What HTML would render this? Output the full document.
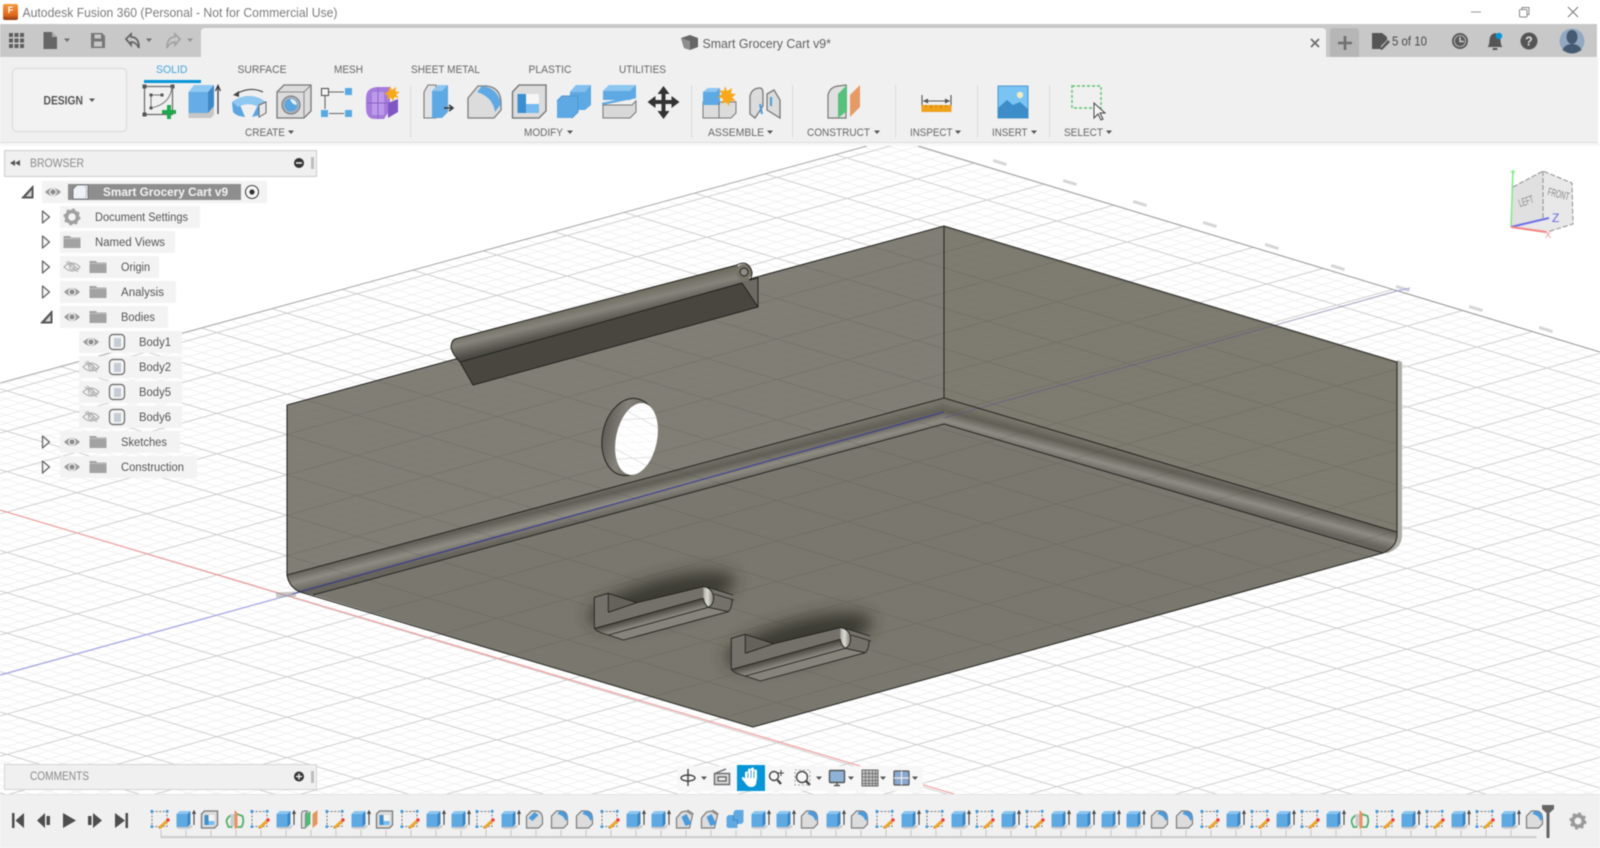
<!DOCTYPE html>
<html><head><meta charset="utf-8"><title>Autodesk Fusion 360</title>
<style>
html,body{margin:0;padding:0;background:#fff;width:1600px;height:848px;overflow:hidden}
svg{display:block;filter:blur(.55px)}
text{font-family:"Liberation Sans",sans-serif}
</style></head><body>
<svg width="1600" height="848" viewBox="0 0 1600 848" xmlns="http://www.w3.org/2000/svg">
<defs>
<pattern id="g" width="100" height="100" patternUnits="userSpaceOnUse" patternTransform="matrix(.7 .21 .7 -.194 285 596)">
<g fill="#eeeeee"><rect x="20" width="2" height="100"/><rect x="40" width="2" height="100"/><rect x="60" width="2" height="100"/><rect x="80" width="2" height="100"/><rect y="20" width="100" height="2"/><rect y="40" width="100" height="2"/><rect y="60" width="100" height="2"/><rect y="80" width="100" height="2"/></g>
<g fill="#d0d0d0"><rect x="0" width="2.6" height="100"/><rect y="0" width="100" height="2.6"/></g>
</pattern>
<pattern id="gd" width="100" height="100" patternUnits="userSpaceOnUse" patternTransform="matrix(.7 .21 .7 -.194 285 596)">
<g fill="#3c3c34" opacity=".03"><rect x="20" width="2" height="100"/><rect x="40" width="2" height="100"/><rect x="60" width="2" height="100"/><rect x="80" width="2" height="100"/><rect y="20" width="100" height="2"/><rect y="40" width="100" height="2"/><rect y="60" width="100" height="2"/><rect y="80" width="100" height="2"/></g>
<g fill="#3c3c34" opacity=".16"><rect x="0" width="2.6" height="100"/><rect y="0" width="100" height="2.6"/></g>
</pattern>
<pattern id="tick" x="160.5" y="830" width="25" height="10" patternUnits="userSpaceOnUse"><rect width="1" height="7" fill="#c4c4c4"/></pattern>
<linearGradient id="bL" gradientUnits="userSpaceOnUse" x1="600" y1="487" x2="607" y2="515"><stop offset="0" stop-color="#777569"/><stop offset=".3" stop-color="#625f57"/><stop offset=".65" stop-color="#8e8c83"/><stop offset="1" stop-color="#66645c"/></linearGradient>
<linearGradient id="bR" gradientUnits="userSpaceOnUse" x1="1170" y1="463" x2="1163" y2="489"><stop offset="0" stop-color="#777569"/><stop offset=".3" stop-color="#625f57"/><stop offset=".65" stop-color="#8e8c83"/><stop offset="1" stop-color="#66645c"/></linearGradient>
<linearGradient id="hd" gradientUnits="userSpaceOnUse" x1="595" y1="300" x2="601" y2="325"><stop offset="0" stop-color="#6d695e"/><stop offset=".45" stop-color="#86847b"/><stop offset="1" stop-color="#4c4a44"/></linearGradient>
<linearGradient id="ho" x1="0" x2="1" y1="0" y2="0"><stop offset="0" stop-color="#5f5d56"/><stop offset=".35" stop-color="#84827a"/><stop offset="1" stop-color="#55534c"/></linearGradient>
<linearGradient id="sl" gradientUnits="userSpaceOnUse" x1="650" y1="606" x2="656" y2="628"><stop offset="0" stop-color="#6a685f"/><stop offset=".35" stop-color="#4f4d46"/><stop offset=".7" stop-color="#8c8a81"/><stop offset="1" stop-color="#55534c"/></linearGradient>
<linearGradient id="cap" x1="0" x2="1" y1="0" y2="0"><stop offset="0" stop-color="#a9a79e"/><stop offset=".4" stop-color="#dcdcd6"/><stop offset="1" stop-color="#77756c"/></linearGradient>
<filter id="blur8" x="-50%" y="-100%" width="200%" height="300%"><feGaussianBlur stdDeviation="8"/></filter>
<clipPath id="grid"><polygon points="0,383 893,139 1600,352 1600,848 0,848"/></clipPath>
<clipPath id="body"><path d="M287 405L944 226L1397 362V532L1383 553L753 727L300 592Q289 587 287 575Z"/></clipPath>
<linearGradient id="app" x1="0" x2="0" y1="0" y2="1"><stop offset="0" stop-color="#f59a3c"/><stop offset=".7" stop-color="#e2661a"/><stop offset="1" stop-color="#8b3a10"/></linearGradient>

<g id="slot">
<path d="M594.3 597.3L608.3 593.3L636.7 602.7L703.3 586.7L708 587.3L733 595L730 602L728.3 611.7L623.3 640L608.3 635Q598 633 594.3 628Z" fill="#73716a"/>
<path d="M595 628.3L703.3 598.3L708.3 607.3L608.3 635Q598 633 595 628.3Z" fill="url(#sl)"/>
<path d="M608.3 635L708.3 607.3L728.3 611.7L623.3 640Z" fill="#85837a"/>
<path d="M703.3 586.7Q712 588 713.5 596Q714.5 604 708.3 607.3Q704 604 703.3 598.3Z" fill="url(#cap)"/>
<path d="M608.3 612.3L636.7 602.7L608.3 593.3Z" fill="#64625a"/>
<g fill="none" stroke="#22221f" stroke-width=".9" stroke-linejoin="round">
<path d="M608.3 612.3V593.3L594.3 597.3V628Q596 632 608.3 635L623.3 640L728.3 611.7Q732 608 732 600"/>
<path d="M608.3 593.3L636.7 602.7L608.3 612.3"/>
<path d="M636.7 602.7L703.3 586.7Q712 588 713.5 596Q714.5 604 708.3 607.3L608.3 635"/>
<path d="M595 628.3L703.3 598.3"/>
<path d="M703.3 598.3Q704 604 708.3 607.3L728.3 611.7"/>
<path d="M708 587.3L733 595M714 594L734 600"/>
</g>
</g>

<g id="sk"><rect x="-7.5" y="-7.5" width="15" height="15" fill="none" stroke="#777" stroke-dasharray="2 1.6"/><g fill="#3c9be0"><rect x="-9" y="-9" width="2.6" height="2.6"/><rect x="6.4" y="-9" width="2.6" height="2.6"/><rect x="-9" y="6.4" width="2.6" height="2.6"/></g><rect x="-1" y="7" width="2.4" height="2.4" fill="#777"/><path d="M0 9L7.5 2" stroke="#eea52a" stroke-width="3"/><circle cx="8.5" cy="1" r="1.7" fill="#ef3d3d"/></g>
<g id="ex"><path d="M-8 7V9L-5 10H5L8 8V6Z" fill="#ccc"/><path d="M-8 -5H3V8H-8Z" fill="#5fa9e3"/><path d="M-8 -5L-5 -8H6L3 -5Z" fill="#8cc6f0"/><path d="M3 -5L6 -8V5L3 8Z" fill="#3c86c4"/><path d="M9.5 6V-7M8 -5L9.5 -8L11 -5" stroke="#444" fill="none" stroke-width="1.1"/></g>
<g id="sh"><path d="M-8 -5L-5 -8H8V6L5 9H-8Z" fill="#dcdcdc" stroke="#777" stroke-width="1.3"/><path d="M-5 -4H5V6H-5Z" fill="#f3f3f3"/><path d="M-5 -4H-1V2H5V6H-5Z" fill="#3d8fce"/><path d="M-1 2H5V6H-1Z" fill="#77bdf0"/></g>
<g id="mi"><path d="M-8 3A7 7 0 0 1 -2 -4L-2 -1M-8 3L-6 8H-2" fill="none" stroke="#54b06f" stroke-width="1.8"/><path d="M2 -5L8 -3Q10 3 7 8H2" fill="none" stroke="#54b06f" stroke-width="1.8"/><rect x="-4" y="-5" width="7" height="12" fill="#ccc"/><path d="M0 -9L3 -6V9L0 10Z" fill="#e59464"/></g>
<g id="pl"><path d="M-8 9V-5Q-8 -8 -5 -8H-2L-4 -5V9Z" fill="#ddd" stroke="#777"/><path d="M-4 -5L1 -8V5L-4 9Z" fill="#54b876"/><path d="M3 -5L8 -9V5L3 9Z" fill="#e39563"/></g>
<g id="fi"><path d="M-8 -3L-3 -8H1Q8 -8 8 0V5L4 9H-8Z" fill="#dcdcdc" stroke="#7c7c7c" stroke-width="1.2"/><path d="M0 -8Q7 -8 8.5 -1L6 2Q4 -4 -2 -5Z" fill="#4b9bdc"/></g>
<g id="ch"><path d="M-8 -3L-3 -8H1Q8 -8 8 0V5L4 9H-8Z" fill="#dcdcdc" stroke="#7c7c7c" stroke-width="1.2"/><path d="M-6 -1L0 -7L4 -4L-2 2Z" fill="#4b9bdc"/></g>
<g id="dr"><path d="M-8 9V-1L-3 -7L2 -8L8 -4L5 9Z" fill="#dcdcdc" stroke="#7c7c7c" stroke-width="1.2"/><path d="M-3 -2L2 -5L7 5L1 7Z" fill="#4b9bdc"/><path d="M3 -9L9 -5" stroke="#666"/></g>
<g id="co"><path d="M-8 -2L-6 -4H-1V-7L1 -9H9V3L7 5H3V9H-6L-8 8Z" fill="#5fa9e3"/><path d="M-1 -4V1H3V5" fill="none" stroke="#3c86c4"/></g>

<g id="eye"><path d="M-8 0Q0 -8 8 0Q0 8 -8 0Z" fill="#9a9a9a"/><circle r="3.8" fill="#f0f0f0"/><circle r="2.5" fill="#8a8a8a"/></g>
<g id="eyeoff"><path d="M-8 0Q0 -8 8 0Q0 8 -8 0Z" fill="none" stroke="#a8a8a8"/><circle r="2.6" fill="none" stroke="#a8a8a8"/><path d="M-6 -5L6 5M-4 -6L7 3" stroke="#a8a8a8"/></g>
<g id="fold"><path d="M-8.5 -6H-2L-1 -4.5H8.5V6H-8.5Z" fill="#a2a2a2"/><path d="M-8.5 -3.5H8.5" stroke="#c8c8c8" stroke-width=".8"/></g>
<g id="bodyi"><rect x="-7.5" y="-7.5" width="15" height="15" rx="3.5" fill="#f4f4f4" stroke="#666" stroke-width="1.2"/><rect x="-3" y="-4" width="7" height="9" fill="#c6ccd6"/></g>
<g id="tr"><path d="M0 -6L7 0L0 6Z" fill="#f6f6f6" stroke="#666" stroke-width="1.3" stroke-linejoin="round"/></g>
<g id="trd"><path d="M0 6H11V-6Z" fill="#5a5a5a" stroke="#555" stroke-linejoin="round"/><path d="M4 4.5H9.5V-2Z" fill="#fff" opacity=".75"/></g>
<g id="dn"><path d="M-3 -1.5H3L0 2Z" fill="#555"/></g>
</defs>

<!-- viewport -->
<rect width="1600" height="848" fill="#fff"/>
<rect width="1600" height="848" fill="url(#g)" clip-path="url(#grid)"/>
<polyline points="0,383 867,146" fill="none" stroke="#a6a6a6" stroke-width="1"/>
<polyline points="918,146 1600,352" fill="none" stroke="#979797" stroke-width="1"/>
<g fill="#c6c6c6" opacity=".7"><rect x="993" y="161" width="14" height="3" transform="rotate(17 1000 162)"/><rect x="1063" y="181" width="14" height="3" transform="rotate(17 1070 182)"/><rect x="1133" y="202" width="14" height="3" transform="rotate(17 1140 203)"/><rect x="1203" y="223" width="14" height="3" transform="rotate(17 1210 224)"/><rect x="1265" y="245" width="14" height="3" transform="rotate(17 1272 246)"/><rect x="1331" y="266" width="14" height="3" transform="rotate(17 1338 267)"/><rect x="1396" y="287" width="14" height="3" transform="rotate(17 1403 288)"/><rect x="1469" y="307" width="14" height="3" transform="rotate(17 1476 308)"/><rect x="1539" y="328" width="14" height="3" transform="rotate(17 1546 329)"/></g>
<line x1="0" y1="510" x2="954" y2="794" stroke="#f29a9a" stroke-width="1.1"/>
<line x1="0" y1="675" x2="300" y2="592" stroke="#a4a4ee" stroke-width="1.1"/>
<line x1="1397" y1="291" x2="1410" y2="288" stroke="#a4a4ee" stroke-width="1"/>

<!-- body -->
<path d="M1397 360L1402 362V535Q1402 548 1388 553L1383 553L1397 532Z" fill="#aeaca5"/>
<path d="M944 424L1383 553L753 727L313 595Z" fill="#7a786e"/>
<path d="M287 405L944 226V398L287 575Z" fill="#807e75"/>
<path d="M944 226L1397 362V532L944 398Z" fill="#7e7b70"/>
<ellipse cx="662" cy="599" rx="76" ry="20" fill="#2a2924" opacity=".8" filter="url(#blur8)" transform="rotate(-15 662 599)"/>
<ellipse cx="799" cy="640" rx="76" ry="20" fill="#2a2924" opacity=".8" filter="url(#blur8)" transform="rotate(-15 799 640)"/>
<path d="M287 575L944 398V424L313 595L300 592Q289 587 287 575Z" fill="url(#bL)"/>
<path d="M944 398L1397 532Q1398 547 1383 553L944 424Z" fill="url(#bR)"/>
<rect width="1600" height="848" fill="url(#gd)" clip-path="url(#body)"/>
<line x1="292" y1="594" x2="944" y2="412" stroke="#30309a" stroke-width="1.1" opacity=".85"/>
<line x1="944" y1="418" x2="1397" y2="291" stroke="#54548c" stroke-width="1" opacity=".55"/>
<g fill="none" stroke="#2b2b28" stroke-width="1.1" stroke-linejoin="round">
<path d="M287 405L944 226L1397 362V532Q1398 547 1383 553L753 727L300 592Q289 587 287 575Z"/>
<path d="M944 226V398"/>
<path d="M287 575L944 398L1397 532"/>
<path d="M313 595L944 424L1383 553"/>
</g>
<rect x="276" y="592" width="20" height="5" fill="#9a9a9a" opacity=".55" transform="rotate(-2 286 594)"/>

<!-- handle -->
<path d="M460 362L742 283L758 278V307L473 385Z" fill="#48463f"/>
<path d="M742 283L758 278V307Z" fill="#6c6a62"/>
<path d="M451 348Q451 341 455 339L737 265L750 280L742 283L460 362Q453 355 451 348Z" fill="url(#hd)"/>
<circle cx="744" cy="272" r="8" fill="#777569"/>
<circle cx="744" cy="272" r="4" fill="#8e8c83"/>
<g fill="none" stroke="#23231f" stroke-width="1">
<path d="M451 348Q451 341 455 339L737 265Q748 259 752 272Q752 277 750 280L758 278V307L473 385L460 362Q453 355 451 348"/>
<path d="M460 362L742 283"/><circle cx="744" cy="272" r="4"/>
<path d="M742 283L758 307"/>
</g>

<!-- hole -->
<ellipse cx="629.500" cy="437" rx="27" ry="39" transform="rotate(12 629.500 437)" fill="url(#ho)" stroke="#25251f" stroke-width="1"/>
<ellipse cx="636.500" cy="439" rx="20.500" ry="36.500" transform="rotate(12 636.500 439)" fill="#fff"/>
<ellipse cx="636.500" cy="439" rx="20.500" ry="36.500" transform="rotate(12 636.500 439)" fill="url(#g)" opacity=".6"/>

<!-- slots -->
<use href="#slot"/>
<use href="#slot" x="137" y="41"/>

<!-- view cube -->
<path d="M1513 187L1543 171L1572 183L1573 224L1547 232L1511 227Z" fill="#e4e4e4" opacity=".85"/>
<path d="M1513 187L1543 171V220L1511 227Z" fill="#e0e0e0"/>
<g fill="none" stroke="#8f8f8f" stroke-dasharray="5 2"><path d="M1513 187L1543 171L1572 183L1573 224L1547 232"/><path d="M1543 171V220"/></g>
<path d="M1511 227L1513 170" stroke="#89e88d" stroke-width="1.6"/>
<path d="M1511 227L1549 218" stroke="#6f6fe8" stroke-width="2"/>
<path d="M1511 227L1546 232" stroke="#f58383" stroke-width="2"/>
<text x="1510" y="177" font-size="9" fill="#8fe891" textLength="6">Y</text>
<text x="1552" y="222" font-size="12" fill="#6767e6" textLength="8">Z</text>
<text x="1545" y="238" font-size="9" fill="#f58b8b" textLength="7">X</text>
<text transform="translate(1520 207) rotate(-18)" font-size="11" fill="#888" textLength="15" lengthAdjust="spacingAndGlyphs">LEFT</text>
<text transform="translate(1547 195) rotate(14)" font-size="11" fill="#888" textLength="22" lengthAdjust="spacingAndGlyphs">FRONT</text>

<!-- title bar -->
<rect width="1600" height="25" fill="#fff"/>
<rect x="3" y="4" width="15" height="16" rx="2" fill="url(#app)"/>
<text x="10.5" y="13" font-size="9" font-weight="700" fill="#fff" text-anchor="middle">F</text>
<text x="22.5" y="17" font-size="13" fill="#7c7c7c" textLength="315" lengthAdjust="spacingAndGlyphs">Autodesk Fusion 360 (Personal - Not for Commercial Use)</text>
<path d="M1471 12H1481" stroke="#999"/>
<g fill="none" stroke="#888"><rect x="1519.5" y="9.5" width="7.5" height="7.5" rx="1"/><path d="M1522 9V7.5H1529V14.5H1527"/></g>
<path d="M1568 7L1578 17M1578 7L1568 17" stroke="#777"/>

<!-- tab strip -->
<rect y="24" width="1597" height="33" fill="#c8c8c8"/>
<rect x="1597" y="24" width="3" height="33" fill="#fff"/>
<path d="M201 57V32Q201 28 205 28H1322Q1326 28 1326 32V57Z" fill="#f0f0f0"/>
<path d="M1330 57V32Q1330 28 1334 28H1355Q1359 28 1359 32V57Z" fill="#b6b6b6"/>
<path d="M1345 36V50M1338 43H1352" stroke="#6f6f6f" stroke-width="2.6"/>
<path d="M1311 39L1319 47M1319 39L1311 47" stroke="#6b6b6b" stroke-width="1.7"/>
<rect y="57" width="1598" height="86" fill="#f0f0f0"/>
<rect y="142" width="1598" height="1" fill="#dcdcdc"/>
<rect y="143" width="1600" height="3" fill="#f7f7f7"/>

<!-- qat -->
<g fill="#5e5e5e"><rect x="9" y="33" width="4" height="4"/><rect x="14.5" y="33" width="4" height="4"/><rect x="20" y="33" width="4" height="4"/><rect x="9" y="38.5" width="4" height="4"/><rect x="14.5" y="38.5" width="4" height="4"/><rect x="20" y="38.5" width="4" height="4"/><rect x="9" y="44" width="4" height="4"/><rect x="14.5" y="44" width="4" height="4"/><rect x="20" y="44" width="4" height="4"/></g>
<path d="M43.5 32H52L57 37V49H43.5Z" fill="#666"/><path d="M52 32V37H57Z" fill="#aaa"/>
<use href="#dn" x="67" y="40" opacity=".8"/>
<path d="M91 33H102L105 36V48H91Z" fill="#777"/><rect x="94.500" y="34.500" width="6.500" height="4" fill="#c8c8c8"/><rect x="94" y="41.500" width="8" height="5" fill="#c8c8c8"/>
<path d="M126 39L131 34V37Q139 37 139 48Q136 42 131 42V45Z" fill="none" stroke="#666" stroke-width="1.8"/>
<use href="#dn" x="149" y="40" opacity=".8"/>
<path d="M180 39L175 34V37Q167 37 167 48Q170 42 175 42V45Z" fill="none" stroke="#a4a4a4" stroke-width="1.8"/>
<use href="#dn" x="190" y="40" opacity=".45"/>

<!-- doc title -->
<path d="M681 38L690 35L698 38V47L690 50L684 48Z" fill="#666"/><path d="M681 38L690 41V50L684 48Z" fill="#8e8e8e"/>
<text x="702.5" y="48" font-size="13" fill="#5f5f5f" textLength="128.5" lengthAdjust="spacingAndGlyphs">Smart Grocery Cart v9*</text>

<!-- right tab icons -->
<path d="M1372 33H1382L1387 37V40L1381 46V49H1372Z" fill="#555"/><path d="M1380 49L1388 40L1390 42L1382 50Z" fill="#555"/>
<text x="1392" y="45.500" font-size="12.5" fill="#4a4a4a" textLength="35" lengthAdjust="spacingAndGlyphs">5 of 10</text>
<circle cx="1460" cy="41" r="8" fill="#5a5a5a"/><circle cx="1460" cy="41" r="5.6" fill="none" stroke="#c8c8c8" stroke-width=".8"/><path d="M1460 37V41.5H1464" stroke="#ddd" fill="none" stroke-width="1.3"/>
<path d="M1495 33Q1490 34 1489.5 40Q1489.5 45 1487.5 47H1502.5Q1500.5 45 1500.5 40Q1500 34 1495 33Z" fill="#555"/><rect x="1492.5" y="48" width="5" height="2" rx="1" fill="#555"/><circle cx="1499" cy="36" r="3.2" fill="#0696d7"/>
<circle cx="1529" cy="41" r="8.5" fill="#555"/><text x="1529" y="45.5" font-size="12.5" font-weight="700" fill="#ddd" text-anchor="middle">?</text>
<circle cx="1572" cy="41" r="12.5" fill="#92a8c2"/><ellipse cx="1572" cy="37" rx="5.5" ry="7" fill="#465a73"/><path d="M1562.5 50Q1565 44 1572 44Q1579 44 1581.5 50Q1572 57 1562.5 50Z" fill="#465a73"/>

<!-- ribbon tabs -->
<g font-size="11" fill="#666">
<text x="156" y="73" fill="#47a3dc" textLength="31.5" lengthAdjust="spacingAndGlyphs">SOLID</text>
<text x="237.5" y="73" textLength="49" lengthAdjust="spacingAndGlyphs">SURFACE</text>
<text x="334" y="73" textLength="29" lengthAdjust="spacingAndGlyphs">MESH</text>
<text x="411" y="73" textLength="69" lengthAdjust="spacingAndGlyphs">SHEET METAL</text>
<text x="528.5" y="73" textLength="43" lengthAdjust="spacingAndGlyphs">PLASTIC</text>
<text x="619" y="73" textLength="47" lengthAdjust="spacingAndGlyphs">UTILITIES</text>
<text x="245" y="136" textLength="40" lengthAdjust="spacingAndGlyphs">CREATE</text>
<text x="524" y="136" textLength="39" lengthAdjust="spacingAndGlyphs">MODIFY</text>
<text x="708" y="136" textLength="56" lengthAdjust="spacingAndGlyphs">ASSEMBLE</text>
<text x="807" y="136" textLength="63" lengthAdjust="spacingAndGlyphs">CONSTRUCT</text>
<text x="910" y="136" textLength="42.5" lengthAdjust="spacingAndGlyphs">INSPECT</text>
<text x="992" y="136" textLength="35.5" lengthAdjust="spacingAndGlyphs">INSERT</text>
<text x="1064" y="136" textLength="39" lengthAdjust="spacingAndGlyphs">SELECT</text>
</g>
<rect x="144" y="80" width="57" height="3" fill="#0696d7"/>
<use href="#dn" x="291" y="132"/><use href="#dn" x="570" y="132"/><use href="#dn" x="770" y="132"/><use href="#dn" x="877" y="132"/><use href="#dn" x="958" y="132"/><use href="#dn" x="1034" y="132"/><use href="#dn" x="1109" y="132"/>
<g fill="#dedede"><rect x="410" y="85" width="1.2" height="53"/><rect x="691" y="85" width="1.2" height="53"/><rect x="792" y="85" width="1.2" height="53"/><rect x="895" y="85" width="1.2" height="53"/><rect x="977" y="85" width="1.2" height="53"/><rect x="1049" y="85" width="1.2" height="53"/></g>

<!-- design -->
<rect x="12.5" y="68.5" width="114" height="63" rx="4" fill="#f2f2f2" stroke="#e0e0e0" stroke-width="1.5"/>
<text x="43.5" y="104.500" font-size="11.5" font-weight="700" fill="#555" textLength="39.5" lengthAdjust="spacingAndGlyphs">DESIGN</text>
<use href="#dn" x="92" y="100"/>

<!-- create icons -->
<g>
<rect x="144.5" y="86.5" width="28" height="28" fill="none" stroke="#666" stroke-width="1.2"/>
<g fill="#555"><rect x="142.5" y="84.5" width="4" height="4"/><rect x="170.5" y="84.5" width="4" height="4"/><rect x="142.5" y="112.5" width="4" height="4"/></g>
<path d="M151 95V108M151 95H161M172 86Q171 104 151 108" fill="none" stroke="#777"/>
<rect x="149.5" y="93.5" width="3" height="3" fill="#555"/><rect x="160.5" y="93.5" width="3" height="3" fill="#555"/><rect x="149.5" y="106.5" width="3" height="3" fill="#555"/>
<path d="M169 105V119M162 112H176" stroke="#1fa84e" stroke-width="4"/>
</g>
<g><path d="M188.5 110V118L211 118L214 115V106Z" fill="#c6c6c6"/><path d="M188.5 92H208V113H188.5Z" fill="#66ade6"/><path d="M188.5 92L194 85H214L208 92Z" fill="#8fc8f2"/><path d="M208 92L214 85V106L208 113Z" fill="#3f88c7"/><path d="M218 114V87M215.5 91L218 85.5L220.5 91" fill="none" stroke="#333" stroke-width="1.2"/></g>
<g><path d="M232 102Q249 90 266 102L264 114L252 117L258 105Q249 100 240 105L245 117Q236 116 233 112Z" fill="#5ba6e0"/><path d="M232 102Q249 90 266 102L260 108Q249 101 238 107Z" fill="#8fc8f2"/><path d="M259 105L266 102V113L259 117Z" fill="#e8e8e8" stroke="#666"/><path d="M236 94Q250 86 263 92" fill="none" stroke="#444" stroke-width="1.2"/><path d="M233 95L239 91V97Z" fill="#444"/></g>
<g><path d="M277 92L284 85H311V111L304 118H277Z" fill="#dcdcdc" stroke="#777" stroke-width="1.3"/><path d="M277 92H304V118M304 92L311 85" fill="none" stroke="#888"/><circle cx="291" cy="105" r="9" fill="#a8b0b8" stroke="#777"/><circle cx="291" cy="105" r="6.5" fill="#5ca6df"/><path d="M290 99Q296 99 297 105Q292 105 290 99Z" fill="#e6f0f8"/></g>
<g><rect x="321.5" y="88.5" width="7" height="7" fill="#f4f4f4" stroke="#555" stroke-width="1.1"/><g fill="#57a9e3"><rect x="345" y="88" width="7" height="7"/><rect x="321" y="110" width="7" height="7"/><rect x="345" y="110" width="7" height="7"/></g><path d="M329 92H344M325 96V109M329 113.5H344" stroke="#666" stroke-width="1.1"/></g>
<g><path d="M366 98Q366 88 377 87H390V110L384 119H375Q366 119 366 108Z" fill="#a57cdc"/><path d="M372 92H384V115H372Z" fill="#bd9bea"/><path d="M367 103H388M378 87V119" stroke="#8a61c4" stroke-width=".9"/><path d="M388 103L398 99V112L388 118Z" fill="#7f56c2"/><path d="M390 86L392 90L396 87L395.5 91.5L400 92L396 94.5L399 98L394.5 97L393 101L390.5 97.5L387 99.5L388 95.5L384 93.5L388 92Z" fill="#f8a81a"/></g>

<!-- modify icons -->
<g><path d="M424 118V92L428 85H436V118Z" fill="#e2e2e2" stroke="#777" stroke-width="1.1"/><path d="M432 118V91L438 85H448V112L442 118Z" fill="#5ea9e4"/><path d="M438 85H448L442 91H432Z" fill="#8dc6f0"/><path d="M444 108H452M449 105L453 108L449 111" fill="none" stroke="#333" stroke-width="1.5"/></g>
<g><path d="M468 98L478 86H487Q501 88 501 103V110L494 118H468Z" fill="#dcdcdc" stroke="#7c7c7c" stroke-width="1.3"/><path d="M482 86Q498 88 501 104L495 112Q493 97 477 92Z" fill="#5ea9e4"/></g>
<g><path d="M512.5 92L519 85H546V111L539 118H512.5Z" fill="#dcdcdc" stroke="#6f6f6f" stroke-width="1.3"/><path d="M517.5 94H539V113H517.5Z" fill="#f5f5f5"/><path d="M517.5 94H526V104H539V113H517.5Z" fill="#3b8ecf"/><path d="M526 104H539V113H526Z" fill="#76bbf0"/></g>
<g><path d="M557 101L562 96H570V92L576 85H591V105L585 110H578V112L572 118H557Z" fill="#5ea9e4"/><path d="M570 92L576 85H591L585 92Z" fill="#84c0ee"/><path d="M557 101L562 96H578V112L572 118" fill="none" stroke="#4d95d0"/></g>
<g><path d="M603 105H632L636 101V112L630 118H603Z" fill="#d8d8d8" stroke="#777"/><path d="M603 91L609 85H636V96L630 100H603Z" fill="#5ea9e4"/><path d="M603 91L609 85H636L630 91Z" fill="#8dc6f0"/><path d="M602 104L636 97" stroke="#5ea9e4" stroke-width="2.4"/></g>
<g fill="#333" transform="translate(.5 1)"><path d="M663 85L669 93H665V99H671V95L679 101L671 107V103H665V110H669L663 118L657 110H661V103H655V107L647 101L655 95V99H661V93H657Z"/></g>

<!-- assemble icons -->
<g><path d="M703 118V102H736V113L731 118Z" fill="#dcdcdc" stroke="#777"/><path d="M703 92L708 88H720V105H703Z" fill="#5ea9e4"/><path d="M703 92L708 88H720L716 92Z" fill="#8dc6f0"/><path d="M719 102V118" stroke="#777"/><path d="M725 86L727 91L732 88L731 93.5L736 94L732 97.5L736 101L730 101L729 106L726 102L722 104L723 98.5L718 97L722 94L719 90L724 91Z" fill="#f8a81a"/></g>
<g fill="#dcdcdc" stroke="#777" stroke-width="1.3"><path d="M750 114V96Q752 88 760 88Q763 88 763 94V106L755 118Z"/><path d="M767 94L774 90L780 100V118L767 110Z"/></g><path d="M760 104L762 114" stroke="#4c9bd8" stroke-width="2"/><path d="M771 97V106" stroke="#4c9bd8" stroke-width="2"/>

<!-- construct -->
<path d="M828 118V95Q830 87 838 86L846 85V118Z" fill="#e0e0e0" stroke="#777" stroke-width="1.2"/>
<path d="M838 118V94L847 85V111Z" fill="#56c07c"/>
<path d="M850 117V95L860 85V107Z" fill="#e59a68"/>

<!-- inspect -->
<path d="M922 95V108M951 95V108M923 101H950" stroke="#555" fill="none" stroke-width="1.1"/><path d="M923 101L928 98.5V103.5ZM950 101L945 98.5V103.5Z" fill="#555"/>
<rect x="921.5" y="105" width="30" height="7" fill="#f0a21b"/>
<path d="M926 105v2M931 105v3M936 105v2M941 105v3M946 105v2" stroke="#b87b10"/>

<!-- insert -->
<rect x="998" y="86" width="30" height="32" fill="#7ac4f4" stroke="#4b97cf"/>
<circle cx="1020" cy="95" r="3.2" fill="#f1edc0"/>
<path d="M998 116V108L1007 100L1013 105L1020 102L1028 109V118H998Z" fill="#3c8dc8"/>

<!-- select -->
<rect x="1072" y="86" width="29" height="22" fill="none" stroke="#5ac26f" stroke-width="1.4" stroke-dasharray="3 2"/>
<path d="M1094 103L1094 118L1098 114L1101 120L1103 119L1100 113H1105Z" fill="#f5f5f5" stroke="#444"/>

<!-- browser panel -->
<rect x="4.5" y="150.5" width="312" height="26" fill="#f0f0f0" stroke="#cdcdcd"/>
<path d="M15 160V166L10 163ZM20 160V166L15 163Z" fill="#555"/>
<text x="30" y="167" font-size="11.5" fill="#8a8a8a" textLength="54" lengthAdjust="spacingAndGlyphs">BROWSER</text>
<circle cx="299" cy="163" r="5" fill="#333"/><rect x="296" y="162.2" width="6" height="1.6" fill="#eee"/>
<rect x="311" y="157" width="3" height="12" fill="#bdbdbd"/>

<!-- rows -->
<g fill="#f3f3f3">
<rect x="42" y="181" width="225" height="22"/>
<rect x="60" y="206" width="140" height="22"/>
<rect x="60" y="231" width="115" height="22"/>
<rect x="60" y="256" width="99" height="22"/>
<rect x="60" y="281" width="116" height="22"/>
<rect x="60" y="306" width="108" height="22"/>
<rect x="79" y="331" width="103" height="22"/>
<rect x="79" y="356" width="103" height="22"/>
<rect x="79" y="381" width="103" height="22"/>
<rect x="79" y="406" width="103" height="22"/>
<rect x="60" y="431" width="120" height="22"/>
<rect x="60" y="456" width="137" height="22"/>
</g>
<rect x="68" y="184" width="173" height="16" fill="#8e8e8e"/>
<use href="#trd" x="22" y="192"/>
<use href="#eye" x="53" y="192"/>
<path d="M73 189L77 185H88V199H73Z" fill="#eef2f8" stroke="#666" stroke-width=".8"/><path d="M85 185Q88 191 85 199" fill="none" stroke="#bbb"/>
<text x="103" y="196" font-size="11.5" font-weight="700" fill="#f4f4f4" textLength="125" lengthAdjust="spacingAndGlyphs">Smart Grocery Cart v9</text>
<circle cx="252" cy="192" r="6.5" fill="#f7f7f7" stroke="#444" stroke-width="1.1"/><circle cx="252" cy="192" r="2.6" fill="#333"/>

<use href="#tr" x="42.5" y="217"/>
<g transform="translate(72 217)"><circle r="5.5" fill="none" stroke="#a0a0a0" stroke-width="3.6"/><circle r="7.3" fill="none" stroke="#a0a0a0" stroke-width="2.4" stroke-dasharray="2.6 3.13"/></g>
<text x="95" y="221" font-size="11.5" fill="#555" textLength="93" lengthAdjust="spacingAndGlyphs">Document Settings</text>

<use href="#tr" x="42.5" y="242"/><use href="#fold" x="72" y="242"/>
<text x="95" y="246" font-size="11.5" fill="#555" textLength="70" lengthAdjust="spacingAndGlyphs">Named Views</text>

<use href="#tr" x="42.5" y="267"/><use href="#eyeoff" x="72" y="267"/><use href="#fold" x="98" y="267"/>
<text x="121" y="271" font-size="11.5" fill="#555" textLength="29" lengthAdjust="spacingAndGlyphs">Origin</text>

<use href="#tr" x="42.5" y="292"/><use href="#eye" x="72" y="292"/><use href="#fold" x="98" y="292"/>
<text x="121" y="296" font-size="11.5" fill="#555" textLength="43" lengthAdjust="spacingAndGlyphs">Analysis</text>

<use href="#trd" x="41" y="317"/><use href="#eye" x="72" y="317"/><use href="#fold" x="98" y="317"/>
<text x="121" y="321" font-size="11.5" fill="#555" textLength="34" lengthAdjust="spacingAndGlyphs">Bodies</text>

<use href="#eye" x="91" y="342"/><use href="#bodyi" x="117" y="342"/>
<text x="139" y="346" font-size="11.5" fill="#555" textLength="32" lengthAdjust="spacingAndGlyphs">Body1</text>
<use href="#eyeoff" x="91" y="367"/><use href="#bodyi" x="117" y="367"/>
<text x="139" y="371" font-size="11.5" fill="#555" textLength="32" lengthAdjust="spacingAndGlyphs">Body2</text>
<use href="#eyeoff" x="91" y="392"/><use href="#bodyi" x="117" y="392"/>
<text x="139" y="396" font-size="11.5" fill="#555" textLength="32" lengthAdjust="spacingAndGlyphs">Body5</text>
<use href="#eyeoff" x="91" y="417"/><use href="#bodyi" x="117" y="417"/>
<text x="139" y="421" font-size="11.5" fill="#555" textLength="32" lengthAdjust="spacingAndGlyphs">Body6</text>

<use href="#tr" x="42.5" y="442"/><use href="#eye" x="72" y="442"/><use href="#fold" x="98" y="442"/>
<text x="121" y="446" font-size="11.5" fill="#555" textLength="46" lengthAdjust="spacingAndGlyphs">Sketches</text>
<use href="#tr" x="42.5" y="467"/><use href="#eye" x="72" y="467"/><use href="#fold" x="98" y="467"/>
<text x="121" y="471" font-size="11.5" fill="#555" textLength="63" lengthAdjust="spacingAndGlyphs">Construction</text>

<!-- nav toolbar -->
<rect x="677" y="766" width="246" height="25" fill="#f7f7f7"/>
<rect x="737" y="765" width="28" height="26" fill="#0696d7"/>
<g fill="none" stroke="#444" stroke-width="1.4">
<path d="M688 769V786"/><ellipse cx="688" cy="778" rx="7" ry="3"/>
<rect x="714.5" y="773.5" width="15" height="11" fill="#d8d8d8" stroke="#666"/><rect x="718" y="777" width="8" height="4" fill="#f2f2f2" stroke="#666"/><path d="M716 773L726 769" stroke="#666"/>
<circle cx="774" cy="776" r="4.5"/><path d="M777.5 780L781 784" stroke-width="2.4"/><path d="M781 770V776M778 773H784" stroke-width="1"/>
<circle cx="802" cy="777" r="5.5"/><path d="M806 781L810 785" stroke-width="2.4"/><rect x="795" y="770" width="15" height="15" stroke-dasharray="2 2" stroke="#888" stroke-width=".8"/>
</g>
<path d="M745 779V773Q745 771.5 746.5 771.5Q748 771.5 748 773V770Q748 768.5 749.5 768.5Q751 768.5 751 770V769Q751 767.5 752.5 767.5Q754 767.5 754 769V771Q754 769.5 755.5 769.5Q757 769.5 757 771V778L756 784Q755 787 751 787Q748 787 746 784L742 779Q741.5 777 743 777Q744 777 745 779Z" fill="#fff"/>
<path d="M748 773V778M751 770V778M754 771V778" stroke="#0696d7" stroke-width=".8"/>
<rect x="837.5" y="770.5" width="15" height="12" rx="1" fill="#8fb3d6" stroke="#555" stroke-width="1.4" transform="translate(-8 0)"/><path d="M834 785.5H840M837 783V785" stroke="#555" stroke-width="1.4"/>
<g><rect x="862" y="770" width="16" height="16" fill="#c4c4c4" stroke="#666"/><path d="M865.500 770V786M869 770V786M872.500 770V786M875.500 770V786M862 773.500H878M862 777H878M862 780.500H878M862 783.500H878" stroke="#666" stroke-width=".8"/></g>
<rect x="894" y="771" width="15" height="14" rx="1" fill="#8ba8d0" stroke="#555" stroke-width="1.2"/><path d="M901.500 771V785M894 778H909" stroke="#eee" stroke-width="1.2"/>
<use href="#dn" x="704" y="778"/><use href="#dn" x="819" y="778"/><use href="#dn" x="851" y="778"/><use href="#dn" x="883" y="778"/><use href="#dn" x="915" y="778"/>

<!-- comments -->
<rect x="4.5" y="764.5" width="312" height="25" fill="#f0f0f0" stroke="#d4d4d4"/>
<text x="30" y="780" font-size="11.5" fill="#8a8a8a" textLength="59" lengthAdjust="spacingAndGlyphs">COMMENTS</text>
<circle cx="299" cy="776.500" r="5" fill="#333"/><path d="M296 776.500H302M299 773.500V779.500" stroke="#eee" stroke-width="1.4"/>
<rect x="311" y="771" width="3" height="12" fill="#bdbdbd"/>

<!-- timeline -->
<rect y="794" width="1600" height="54" fill="#f0f0f0"/>
<rect y="794" width="1600" height="1" fill="#e4e4e4"/>
<g fill="#4d4d4d">
<path d="M12 813H14.500V828H12ZM24 813V828L15.500 820.500Z"/>
<path d="M37 820.500L45 813V828ZM46.500 816H50V825H46.500Z"/>
<path d="M63 813L76 820.500L63 828Z"/>
<path d="M88 816H91.500V825H88ZM93 813L102 820.500L93 828Z"/>
<path d="M115 813L125 820.500L115 828ZM125.500 813H128V828H125.500Z"/>
</g>
<rect x="160.500" y="830" width="1375" height="7" fill="url(#tick)"/>
<rect x="160.500" y="836" width="1376" height="2.200" fill="#cdcdcd"/>
<g transform="translate(-1.500 0)">
<use href="#sk" x="161" y="819"/><use href="#ex" x="186" y="819"/><use href="#sh" x="211" y="819"/><use href="#mi" x="236" y="819"/><use href="#sk" x="261" y="819"/><use href="#ex" x="286" y="819"/><use href="#pl" x="311" y="819"/><use href="#sk" x="336" y="819"/><use href="#ex" x="361" y="819"/><use href="#sh" x="386" y="819"/><use href="#sk" x="411" y="819"/><use href="#ex" x="436" y="819"/><use href="#ex" x="461" y="819"/><use href="#sk" x="486" y="819"/><use href="#ex" x="511" y="819"/><use href="#ch" x="536" y="819"/><use href="#fi" x="561" y="819"/><use href="#fi" x="586" y="819"/><use href="#sk" x="611" y="819"/><use href="#ex" x="636" y="819"/><use href="#ex" x="661" y="819"/><use href="#dr" x="686" y="819"/><use href="#dr" x="711" y="819"/><use href="#co" x="736" y="819"/><use href="#ex" x="761" y="819"/><use href="#ex" x="786" y="819"/><use href="#fi" x="811" y="819"/><use href="#ex" x="836" y="819"/><use href="#fi" x="861" y="819"/><use href="#sk" x="886" y="819"/><use href="#ex" x="911" y="819"/><use href="#sk" x="936" y="819"/><use href="#ex" x="961" y="819"/><use href="#sk" x="986" y="819"/><use href="#ex" x="1011" y="819"/><use href="#sk" x="1036" y="819"/><use href="#ex" x="1061" y="819"/><use href="#ex" x="1086" y="819"/><use href="#ex" x="1111" y="819"/><use href="#ex" x="1136" y="819"/><use href="#fi" x="1161" y="819"/><use href="#fi" x="1186" y="819"/><use href="#sk" x="1211" y="819"/><use href="#ex" x="1236" y="819"/><use href="#sk" x="1261" y="819"/><use href="#ex" x="1286" y="819"/><use href="#sk" x="1311" y="819"/><use href="#ex" x="1336" y="819"/><use href="#mi" x="1361" y="819"/><use href="#sk" x="1386" y="819"/><use href="#ex" x="1411" y="819"/><use href="#sk" x="1436" y="819"/><use href="#ex" x="1461" y="819"/><use href="#sk" x="1486" y="819"/><use href="#ex" x="1511" y="819"/><use href="#fi" x="1536" y="819"/>
</g>
<path d="M1542 805H1554V809L1549.500 813V838H1546.500V813L1542 809Z" fill="#666"/>
<g transform="translate(1578 821)"><circle r="5.300" fill="none" stroke="#9a9a9a" stroke-width="3.600"/><circle r="7.300" fill="none" stroke="#9a9a9a" stroke-width="2.600" stroke-dasharray="2.800 2.930"/></g>
</svg>
</body></html>
